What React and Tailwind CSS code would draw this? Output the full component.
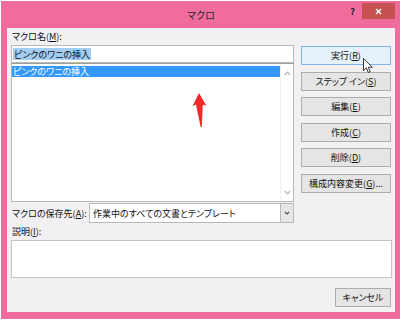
import React from "react";

const U = ({ children }) => <span className="underline underline-offset-[1px]">{children}</span>;

function Btn({ children, mt, hover }) {
  return (
    <div
      className={
        "h-[19px] w-[90px] flex items-center justify-center text-[9px] leading-none border " +
        (hover ? "bg-[#e5f1fb] border-[#7eb4ea] " : "bg-[#e5e5e5] border-[#adadad] ") +
        mt
      }
    >
      {children}
    </div>
  );
}

function Chevron({ up, color = "#b5b5b5", w = 7, h = 5, sw = 1.2 }) {
  return (
    <svg width={w} height={h} viewBox="0 0 7 5">
      <path
        d={up ? "M0.8 4 L3.5 1.2 L6.2 4" : "M0.8 1 L3.5 3.8 L6.2 1"}
        fill="none"
        stroke={color}
        strokeWidth={sw}
      />
    </svg>
  );
}

export default function App() {
  return (
    <div className="relative w-[402px] h-[321px] bg-white overflow-hidden font-['Noto_Sans_CJK_JP',sans-serif] [font-feature-settings:'palt'] text-[#111]">
      <div className="ml-[1px] mt-[1px] w-[399px] h-[318px] bg-[#f06c9c] flex flex-col pl-[6px] pr-[5px] pb-[7px]">
        {/* title bar */}
        <div className="h-[27px] flex">
          <div className="flex-1" />
          <div className="flex items-center text-[10px] text-[#2a2a2a] pb-[1px]">マクロ</div>
          <div className="flex-1 flex justify-end items-start pt-[2px]">
            <div className="mt-[4px] mr-[7px] text-[9px] font-bold leading-none text-[#222]">?</div>
            <div className="w-[33px] h-[16px] bg-[#c75050] flex items-center justify-center">
              <svg width="7" height="7" viewBox="0 0 7 7">
                <path d="M1 1 L6 6 M6 1 L1 6" stroke="#fff" strokeWidth="1.4" />
              </svg>
            </div>
          </div>
        </div>

        {/* content */}
        <div className="flex-1 bg-[#f2f0f2] flex flex-col pl-[4px] pr-[3px] text-[9px] leading-none">
          <div className="flex">
            {/* left column */}
            <div className="w-[283px] flex flex-col">
              <div className="h-[17px] flex items-center pl-[1px]">
                マクロ名(<U>M</U>):
              </div>
              <div className="h-[18px] bg-white border border-[#b9b9b9] flex items-center pl-[1px]">
                <span className="bg-[#a3cdf1] h-[12px] flex items-center px-[1px]">ピンクのワニの挿入</span>
              </div>
              <div className="h-[139px] bg-white border border-[#b9b9b9] border-t-[#9d9d9d] flex">
                <div className="flex-1 pt-[2px]">
                  <div className="h-[11px] bg-[#3399ff] text-white flex items-center pl-[1px]">ピンクのワニの挿入</div>
                </div>
                <div className="w-[13px] flex flex-col items-center justify-between pt-[7px] pb-[6px] border-l border-[#f0f0f0]">
                  <Chevron up />
                  <Chevron />
                </div>
              </div>
              <div className="mt-[1px] h-[20px] flex items-center">
                <div className="w-[78px] pl-[1px]">
                  マクロの保存先(<U>A</U>):
                </div>
                <div className="flex-1 h-[20px] bg-white border border-[#b9b9b9] flex">
                  <div className="flex-1 flex items-center pl-[3px]">作業中のすべての文書とテンプレート</div>
                  <div className="w-[13px] bg-[#e6e6e6] border-l border-[#b9b9b9] flex items-center justify-center">
                    <Chevron color="#444" w={6} h={4} sw={1.4} />
                  </div>
                </div>
              </div>
            </div>

            {/* right column */}
            <div className="ml-[7px] flex flex-col">
              <Btn mt="mt-[18px]" hover>
                実行(<U>R</U>)
              </Btn>
              <Btn mt="mt-[7px]">
                ステップ イン(<U>S</U>)
              </Btn>
              <Btn mt="mt-[6px]">
                編集(<U>E</U>)
              </Btn>
              <Btn mt="mt-[7px]">
                作成(<U>C</U>)
              </Btn>
              <Btn mt="mt-[6px]">
                削除(<U>D</U>)
              </Btn>
              <Btn mt="mt-[7px]">
                構成内容変更(<U>G</U>)...
              </Btn>
            </div>
          </div>

          <div className="h-[17px] flex items-center pl-[1px]">
            説明(<U>I</U>):
          </div>
          <div className="h-[38px] bg-white border border-[#c5c5c5]" />
          <div className="mt-[10px] flex justify-end pr-[1px]">
            <div className="h-[19px] w-[56px] flex items-center justify-center bg-[#e5e5e5] border border-[#adadad]">
              キャンセル
            </div>
          </div>
        </div>
      </div>

      {/* red annotation arrow */}
      <svg className="absolute left-0 top-0" width="402" height="321" viewBox="0 0 402 321">
        <polygon
          points="199,93 206.5,106 202.8,104.5 201.8,127 200.6,127 196,104.5 192.5,106"
          fill="#f42a2a"
        />
      </svg>

      {/* mouse cursor */}
      <svg className="absolute left-[363px] top-[58px]" width="11" height="16" viewBox="0 0 11 16">
        <path
          d="M0.5 0.5 L0.5 12.5 L3.3 9.8 L5.3 14.5 L7.2 13.7 L5.3 9.2 L9.3 9.2 Z"
          fill="#fff"
          stroke="#222"
          strokeWidth="0.9"
          strokeLinejoin="round"
        />
      </svg>
    </div>
  );
}
